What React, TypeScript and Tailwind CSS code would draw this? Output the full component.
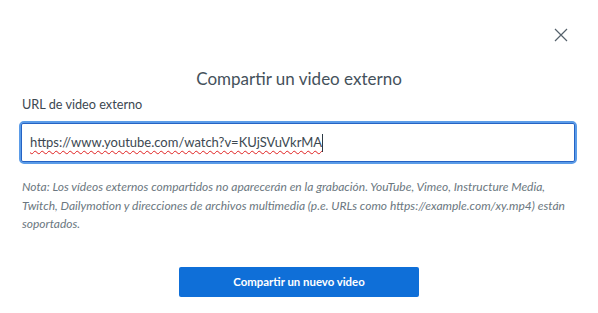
import React from "react";

export default function App() {
  return (
    <div className="relative w-[598px] h-[313px] bg-white overflow-hidden text-[#2d3b45] font-['Lato','Noto_Sans',sans-serif]">
      <button className="absolute left-[553px] top-[27px] w-[15px] h-[15px] flex items-center justify-center text-[#55616b]">
        <svg width="14" height="14" viewBox="0 0 14 14" fill="none" stroke="currentColor" strokeWidth="1.2">
          <path d="M1 1 L13 13 M13 1 L1 13" />
        </svg>
      </button>
      <div className="flex flex-col pt-[67px]">
        <h2 className="text-center text-[17px] leading-[24px] text-[#45515b]">Compartir un video externo</h2>
        <label className="mt-[3px] ml-[22px] text-[12.7px] leading-[20px] text-[#3c4851]">URL de video externo</label>
        <div className="mt-[7px] ml-[19px] mr-[21px] h-[43px] rounded-[5px] border-[2px] border-[#5b9ce8]">
          <div className="h-full rounded-[2px] border border-[#2563c4] flex items-center pl-[8px] text-[13px] text-[#3c4851]">
            <span className="underline decoration-wavy decoration-[#e02020] decoration-1 underline-offset-[3px]">https://www.youtube.com/watch?v=KUjSVuVkrMA</span>
            <span className="w-px h-[18px] bg-[#2d3b45]" />
          </div>
        </div>
        <p className="mt-[14px] ml-[22px] mr-[20px] text-[12px] leading-[18.5px] italic text-[#6b7780]">
          Nota: Los vídeos externos compartidos no aparecerán en la grabación. YouTube, Vimeo, Instructure Media, Twitch, Dailymotion y direcciones de archivos multimedia (p.e. URLs como https://example.com/xy.mp4) están soportados.
        </p>
        <div className="mt-[33px] flex justify-center">
          <button className="w-[240px] h-[30px] rounded-[2px] bg-[#0f6fd8] text-white text-[11.4px] font-bold">Compartir un nuevo video</button>
        </div>
      </div>
    </div>
  );
}
